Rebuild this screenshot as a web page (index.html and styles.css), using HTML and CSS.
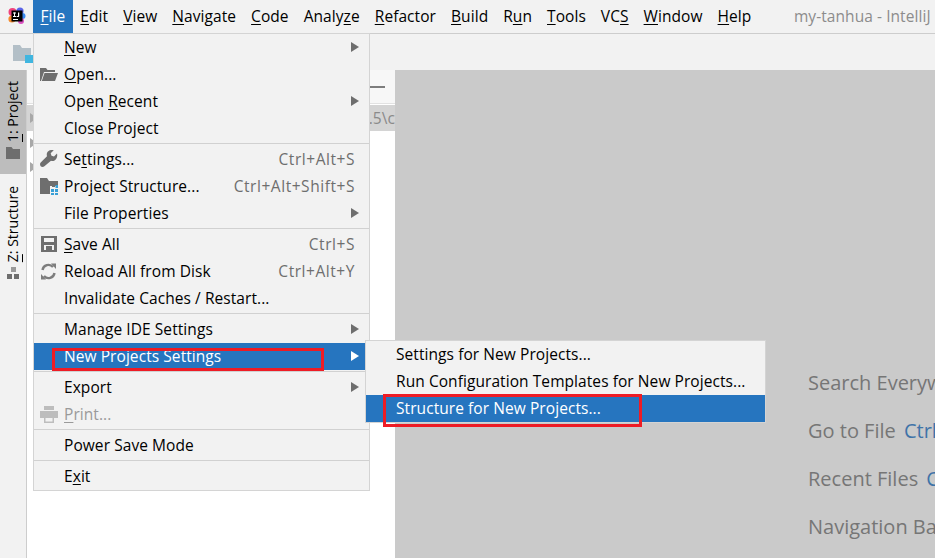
FILE: index.html
```html
<!DOCTYPE html>
<html lang="en">
<head>
<meta charset="utf-8">
<title>my-tanhua - IntelliJ IDEA</title>
<link rel="stylesheet" href="styles.css">
</head>
<body>
<div class="app">
  <header class="menubar">
    <span class="logo">
      <svg width="18" height="18" viewBox="0 0 18 18"><circle cx="4.5" cy="5" r="4" fill="#f0427c"/><circle cx="12" cy="4" r="3.6" fill="#5a63e8"/><circle cx="14.5" cy="9" r="3" fill="#3b8bf0"/><circle cx="4" cy="12" r="3.6" fill="#f58a2c"/><circle cx="13" cy="14" r="3" fill="#d94fc0"/><rect x="3.5" y="3.5" width="11" height="11" fill="#000"/><rect x="5" y="5.5" width="3" height="1" fill="#fff"/><rect x="6" y="5.5" width="1" height="4" fill="#fff"/><rect x="5" y="9" width="3" height="1" fill="#fff"/><rect x="10" y="5.5" width="1.2" height="4" fill="#fff"/><rect x="8.6" y="9" width="2.4" height="1" fill="#fff"/><rect x="5" y="12" width="5" height="1" fill="#fff"/></svg>
    </span>
    <span class="top-item active"><u>F</u>ile</span>
    <span class="top-item"><u>E</u>dit</span>
    <span class="top-item"><u>V</u>iew</span>
    <span class="top-item"><u>N</u>avigate</span>
    <span class="top-item"><u>C</u>ode</span>
    <span class="top-item">Analy<u>z</u>e</span>
    <span class="top-item"><u>R</u>efactor</span>
    <span class="top-item"><u>B</u>uild</span>
    <span class="top-item">R<u>u</u>n</span>
    <span class="top-item"><u>T</u>ools</span>
    <span class="top-item">VC<u>S</u></span>
    <span class="top-item"><u>W</u>indow</span>
    <span class="top-item"><u>H</u>elp</span>
    <span class="window-title">my-tanhua - IntelliJ IDEA</span>
  </header>

  <div class="toolbar">
    <svg class="module-icon" width="20" height="19" viewBox="0 0 20 19"><path d="M0 1h7l2 3h9v8h-5v5H0z" fill="#b3bfc7"/><rect x="12" y="11" width="8" height="8" fill="#40b6e0"/></svg>
  </div>

  <div class="workspace">
    <aside class="stripe">
      <div class="tool-tab tab-project">
        <span class="tab-label"><u>1</u>: Project</span>
        <svg width="14" height="12" viewBox="0 0 14 12"><path d="M0 0h5.500l1.500 2h7v10H0z" fill="#6e6e6e"/></svg>
      </div>
      <div class="tool-tab tab-structure">
        <span class="tab-label"><u>Z</u>: Structure</span>
        <svg width="13" height="13" viewBox="0 0 13 13"><rect x="4" y="0" width="5" height="5" fill="#9a9a9a"/><rect x="0" y="7" width="5" height="5" fill="#6e6e6e"/><rect x="7" y="7" width="5" height="5" fill="#6e6e6e"/></svg>
      </div>
    </aside>

    <section class="panel">
      <div class="panel-head"><span class="hide-bar"></span></div>
      <div class="path-row"><i class="tree-arrow"></i><span class="path-text">.5\c</span></div>
      <div class="tree-row first"><i class="tree-arrow"></i></div>
      <div class="tree-row"><i class="tree-arrow"></i></div>
    </section>

    <main class="editor">
      <p class="hint">Search Everywhere <b>Double Shift</b></p>
      <p class="hint">Go to File <b>Ctrl+Shift+N</b></p>
      <p class="hint">Recent Files <b>Ctrl+E</b></p>
      <p class="hint">Navigation Bar <b>Alt+Home</b></p>
    </main>
  </div>

  <nav class="menu file-menu">
    <div class="row"><span class="ico"></span><span class="lbl"><u>N</u>ew</span><i class="arrow"></i></div>
    <div class="row"><span class="ico"><svg width="18" height="14" viewBox="0 0 18 14"><path d="M0 1h6l1.500 2H15v2H4L1 14H0z" fill="#6e6e6e"/><path d="M4.500 6H18l-3 8H1.800z" fill="#6e6e6e"/></svg></span><span class="lbl"><u>O</u>pen...</span></div>
    <div class="row"><span class="ico"></span><span class="lbl">Open <u>R</u>ecent</span><i class="arrow"></i></div>
    <div class="row"><span class="ico"></span><span class="lbl">Close Project</span></div>
    <hr class="sep">
    <div class="row"><span class="ico"><svg width="18" height="18" viewBox="0 0 18 18"><path d="M17 3.500l-3 3-2.500-.8-.8-2.500 3-3C11 -.6 8 .5 7 3c-.4 1.200-.3 2.300 0 3.200L.7 12.500c-.9.900-.9 2.600 0 3.700s2.800 1 3.700 0L11 10.800c1 .4 2.200.4 3.200 0 2.400-1 3.600-4.500 2.800-7.300z" fill="#6e6e6e"/></svg></span><span class="lbl">Se<u>t</u>tings...</span><span class="key">Ctrl+Alt+S</span></div>
    <div class="row"><span class="ico"><svg width="18" height="17" viewBox="0 0 18 17"><path d="M0 0h7l2 3h9v5h-8v8H0z" fill="#6e6e6e"/><rect x="12" y="6" width="3" height="3" fill="#6e6e6e"/><rect x="15.500" y="7" width="2.500" height="3" fill="#389fd6"/><rect x="11" y="11" width="3" height="3" fill="#389fd6"/><rect x="15" y="11" width="3" height="3" fill="#389fd6"/><rect x="11" y="15" width="3" height="2" fill="#389fd6"/><rect x="15" y="15" width="3" height="2" fill="#389fd6"/></svg></span><span class="lbl">Project Structure...</span><span class="key">Ctrl+Alt+Shift+S</span></div>
    <div class="row"><span class="ico"></span><span class="lbl">File Properties</span><i class="arrow"></i></div>
    <hr class="sep">
    <div class="row"><span class="ico"><svg width="16" height="16" viewBox="0 0 16 16"><path fill-rule="evenodd" d="M0 0h16v16H0zM3 2v4h10V2zM3 9v5h10V9z" fill="#6e6e6e"/><rect x="5" y="10" width="6" height="4" fill="#6e6e6e"/></svg></span><span class="lbl"><u>S</u>ave All</span><span class="key">Ctrl+S</span></div>
    <div class="row"><span class="ico"><svg width="17" height="17" viewBox="0 0 17 17"><path d="M2.500 7A6 6 0 0 1 13 4" fill="none" stroke="#7d7d7d" stroke-width="2.400"/><path d="M11 .5h5v5.500z" fill="#7d7d7d"/><path d="M14.500 10A6 6 0 0 1 4 13" fill="none" stroke="#7d7d7d" stroke-width="2.400"/><path d="M6 16.500H1V11z" fill="#7d7d7d"/></svg></span><span class="lbl">Reload All from Disk</span><span class="key">Ctrl+Alt+Y</span></div>
    <div class="row"><span class="ico"></span><span class="lbl">Invalidate Caches / Restart...</span></div>
    <hr class="sep">
    <div class="row"><span class="ico"></span><span class="lbl">Manage IDE Settings</span><i class="arrow"></i></div>
    <div class="row selected"><span class="ico"></span><span class="lbl">New Projects Settings</span><i class="arrow"></i></div>
    <hr class="sep">
    <div class="row"><span class="ico"></span><span class="lbl">Export</span><i class="arrow"></i></div>
    <div class="row disabled"><span class="ico"><svg width="18" height="17" viewBox="0 0 18 17"><rect x="4" y="0" width="10" height="4" fill="#bdbdbd"/><rect x="0" y="5" width="18" height="7" fill="#bdbdbd"/><path fill-rule="evenodd" d="M4 10h10v7H4zM5.500 12v3.500h7V12z" fill="#bdbdbd"/></svg></span><span class="lbl"><u>P</u>rint...</span></div>
    <hr class="sep">
    <div class="row"><span class="ico"></span><span class="lbl">Power Save Mode</span></div>
    <hr class="sep">
    <div class="row"><span class="ico"></span><span class="lbl">E<u>x</u>it</span></div>
  </nav>

  <nav class="menu sub-menu">
    <div class="row"><span class="lbl">Settings for New Projects...</span></div>
    <div class="row"><span class="lbl">Run Configuration Templates for New Projects...</span></div>
    <div class="row selected"><span class="lbl">Structure for New Projects...</span></div>
  </nav>

  <div class="mark mark-a"></div>
  <div class="mark mark-b"></div>
</div>
</body>
</html>
```
FILE: styles.css
```css
* { box-sizing: border-box; }
html, body { margin: 0; padding: 0; }
body { background: #fff; color: #000; font-family: "Open Sans", "Noto Sans", sans-serif; font-size: 15.5px; letter-spacing: .07px; }
u { text-underline-offset: 2px; text-decoration-thickness: 1px; }

.app { position: relative; width: 935px; height: 558px; overflow: hidden; display: flex; flex-direction: column; }

.menubar { height: 34px; flex: none; display: flex; align-items: stretch; background: #f2f2f2; border-bottom: 1px solid #cdcdcd; white-space: nowrap; overflow: hidden; }
.logo { width: 33px; flex: none; display: flex; align-items: center; justify-content: center; padding-left: 1px; padding-bottom: 1px; }
.top-item { flex: none; display: flex; align-items: center; padding: 0 7.5px 1px; height: 33px; }
.top-item.active { background: #2675bf; color: #fff; }
.window-title { flex: none; display: flex; align-items: center; height: 33px; margin-left: 35px; padding-bottom: 1px; color: #8c8c8c; }

.toolbar { height: 36px; flex: none; background: #f2f2f2; display: flex; align-items: center; padding: 2px 0 0 13px; }

.workspace { flex: 1; display: flex; min-height: 0; }
.stripe { width: 27px; flex: none; background: #f2f2f2; border-right: 1px solid #cdcdcd; display: flex; flex-direction: column; }
.tool-tab { display: flex; flex-direction: column; align-items: center; width: 26px; }
.tab-project { height: 104px; background: #bdbdbd; padding-top: 11px; gap: 5px; }
.tab-structure { padding-top: 12px; gap: 5px; }
.tab-label { writing-mode: vertical-rl; transform: rotate(180deg); font-size: 14px; letter-spacing: 0; line-height: 14px; }

.panel { width: 368px; flex: none; background: #fff; }
.panel-head { height: 34px; background: #f7f7f7; border-bottom: 1px solid #e2e2e2; display: flex; align-items: center; justify-content: flex-end; padding-right: 10px; }
.hide-bar { width: 15px; height: 2px; background: #7d7d7d; }
.path-row { height: 26px; margin-top: 1px; background: #d4d4d4; display: flex; align-items: center; justify-content: space-between; padding-left: 3px; color: #8a8a8a; overflow: hidden; }
.tree-row { height: 24px; display: flex; align-items: center; padding-left: 3px; }
.tree-arrow { width: 0; height: 0; border-left: 7px solid #a8a8a8; border-top: 5px solid transparent; border-bottom: 5px solid transparent; }

.editor { flex: 1; background: #cacaca; padding: 299px 0 0 413px; overflow: hidden; white-space: nowrap; }
.hint { margin: 0 0 20px; height: 28px; line-height: 28px; font-size: 20px; letter-spacing: 0; color: #767676; }
.hint b { font-weight: 400; color: #3f73a8; margin-left: 3px; }

.menu { position: absolute; background: #f2f2f2; border: 1px solid #d4d4d4; white-space: nowrap; }
.file-menu { left: 33px; top: 33px; width: 337px; }
.sub-menu { left: 365px; top: 340px; width: 401px; height: 83px; }
.row { height: 27px; display: flex; align-items: center; padding: 0 10px 1px 0; }
.ico { width: 30px; flex: none; display: flex; justify-content: center; padding-right: 1px; }
.lbl { flex: 1; }
.sub-menu .lbl { padding-left: 30px; }
.key { color: #6e6e6e; margin-right: 4px; letter-spacing: .55px; }
.arrow { width: 0; height: 0; border-left: 8px solid #6e6e6e; border-top: 5px solid transparent; border-bottom: 5px solid transparent; }
.selected { background: #2675bf; color: #fff; }
.selected .arrow { border-left-color: #fff; }
.disabled { color: #9a9a9a; }
.sep { height: 1px; margin: 1px 0 2px; border: 0; background: #d1d1d1; }

.mark { position: absolute; border: 3px solid #ee1c25; }
.mark-a { left: 52px; top: 348px; width: 272px; height: 23px; }
.mark-b { left: 383px; top: 394px; width: 259px; height: 33px; }
```
